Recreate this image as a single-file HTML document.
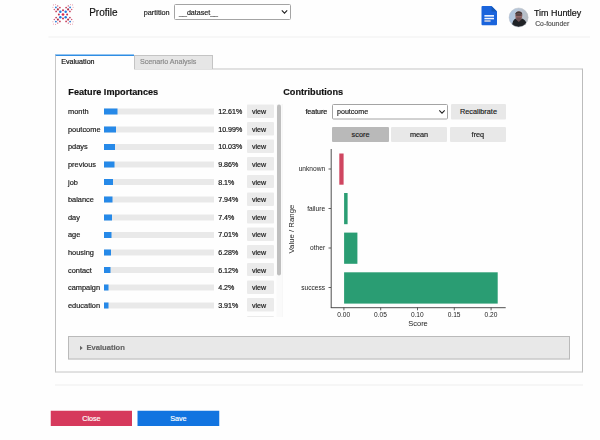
<!DOCTYPE html>
<html><head><meta charset="utf-8"><title>Profile</title>
<style>
html,body{margin:0;padding:0;background:#fefefe;}
body{width:600px;height:440px;position:relative;overflow:hidden;font-family:"Liberation Sans",Arial,sans-serif;color:#1a1a1a;}
#outer{position:absolute;left:0;top:0;width:1200px;height:880px;transform:scale(0.5);transform-origin:0 0;}
#inner{position:absolute;left:0;top:0;width:600px;height:440px;zoom:2;-webkit-text-stroke:0.18px;}
.abs{position:absolute;}
.title{left:89.2px;top:6.9px;font-size:10px;color:#111}
.plabel{left:143.7px;top:8.1px;font-size:7.3px;color:#222}
.sel{border:1px solid #a4a4a4;border-radius:1.5px;background:#fff;box-sizing:border-box;font-size:7.1px;color:#222;}
.hr{left:48.4px;width:541.4px;height:1px;background:#f0f0f0}
.uname{left:533.9px;top:7.9px;font-size:8.95px;color:#111}
.urole{left:535.2px;top:19.3px;font-size:6.8px;color:#555}
.panel{left:55px;top:68.4px;width:528px;height:304.3px;border:1px solid #c6c6c6;border-right-color:#bcbcbc;border-left-color:#c0c0c0;box-sizing:border-box;background:#fefefe}
.tab1{left:55px;top:54.6px;width:79.2px;height:15.6px;box-sizing:border-box;border-left:1px solid #c8c8c8;border-top:1.5px solid #2f8de4;background:#fefefe}
.tab1t{left:61.2px;top:55.5px;font-size:7.15px;line-height:11.6px;color:#111}
.tab2{left:134px;top:55.2px;width:79px;height:13.6px;box-sizing:border-box;border:1px solid #c4c4c4;border-bottom:none;background:#e6e6e6;font-size:7.15px;line-height:11.4px;padding-left:4.9px;color:#8a8a8a}
h3{margin:0;font-size:9.15px;font-weight:bold;color:#111;position:absolute}
.row{position:absolute;left:0;height:16px;width:300px;font-size:7.4px;line-height:16px}
.fn{position:absolute;left:68px;color:#1a1a1a}
.track{position:absolute;left:104px;top:5.2px;width:110px;height:6px;background:#e9e9e9}
.fill{position:absolute;left:0;top:0;height:100%;background:#2689e8}
.pc{position:absolute;left:218.2px;color:#111;font-size:7.1px}
.vb{position:absolute;left:246.8px;top:0.9px;width:27.4px;height:13.4px;box-sizing:border-box;background:#ebebeb;padding-left:5.2px;font-size:7.1px;line-height:14.6px;color:#222;border-radius:1px}
.btn{position:absolute;background:#e8e8e8;text-align:center;font-size:7.3px;color:#222;border-radius:1px}
.acc{left:68px;top:336px;width:502px;height:23.5px;box-sizing:border-box;border:1px solid #bababa;background:#e8e8e8;font-size:7.6px;font-weight:bold;color:#666;line-height:21.4px}
.bb{position:absolute;top:410.6px;height:15.6px;width:81.4px;color:#fff;font-size:7.2px;text-align:center;line-height:15.4px}
svg text{font-family:"Liberation Sans",Arial,sans-serif}
</style></head><body><div id="outer"><div id="inner">
<svg class="abs" style="left:49.80px;top:1.40px" width="26" height="26" viewBox="-13 -13 26 26"><circle cx="0.00" cy="0.00" r="1.35" fill="#d8294f"/><circle cx="4.15" cy="0.00" r="1.0" fill="#c0304e"/><circle cx="-4.15" cy="0.00" r="1.0" fill="#c0304e"/><circle cx="0.00" cy="4.10" r="1.0" fill="#c0304e"/><circle cx="0.00" cy="-4.20" r="1.0" fill="#c0304e"/><circle cx="2.66" cy="2.66" r="1.25" fill="#1f7ae0"/><circle cx="5.10" cy="5.10" r="1.05" fill="#a8304a"/><circle cx="7.10" cy="7.10" r="0.95" fill="#2f7fd8"/><circle cx="3.10" cy="6.90" r="0.9" fill="#c8405c"/><circle cx="6.90" cy="3.10" r="0.9" fill="#c8405c"/><circle cx="5.30" cy="8.60" r="0.7" fill="#cc5070"/><circle cx="8.70" cy="5.00" r="0.7" fill="#cc5070"/><circle cx="9.60" cy="9.60" r="0.55" fill="#e59aaa"/><circle cx="7.40" cy="9.90" r="0.55" fill="#e59aaa"/><circle cx="10.10" cy="7.30" r="0.55" fill="#e59aaa"/><circle cx="2.66" cy="-2.66" r="1.25" fill="#1f7ae0"/><circle cx="5.10" cy="-5.10" r="1.05" fill="#a8304a"/><circle cx="7.10" cy="-7.10" r="0.95" fill="#2f7fd8"/><circle cx="3.10" cy="-6.90" r="0.9" fill="#c8405c"/><circle cx="6.90" cy="-3.10" r="0.9" fill="#c8405c"/><circle cx="5.30" cy="-8.60" r="0.7" fill="#cc5070"/><circle cx="8.70" cy="-5.00" r="0.7" fill="#cc5070"/><circle cx="9.60" cy="-9.60" r="0.55" fill="#e59aaa"/><circle cx="7.40" cy="-9.90" r="0.55" fill="#e59aaa"/><circle cx="10.10" cy="-7.30" r="0.55" fill="#e59aaa"/><circle cx="-2.66" cy="2.66" r="1.25" fill="#1f7ae0"/><circle cx="-5.10" cy="5.10" r="1.05" fill="#a8304a"/><circle cx="-7.10" cy="7.10" r="0.95" fill="#2f7fd8"/><circle cx="-3.10" cy="6.90" r="0.9" fill="#c8405c"/><circle cx="-6.90" cy="3.10" r="0.9" fill="#c8405c"/><circle cx="-5.30" cy="8.60" r="0.7" fill="#cc5070"/><circle cx="-8.70" cy="5.00" r="0.7" fill="#cc5070"/><circle cx="-9.60" cy="9.60" r="0.55" fill="#e59aaa"/><circle cx="-7.40" cy="9.90" r="0.55" fill="#e59aaa"/><circle cx="-10.10" cy="7.30" r="0.55" fill="#e59aaa"/><circle cx="-2.66" cy="-2.66" r="1.25" fill="#1f7ae0"/><circle cx="-5.10" cy="-5.10" r="1.05" fill="#a8304a"/><circle cx="-7.10" cy="-7.10" r="0.95" fill="#2f7fd8"/><circle cx="-3.10" cy="-6.90" r="0.9" fill="#c8405c"/><circle cx="-6.90" cy="-3.10" r="0.9" fill="#c8405c"/><circle cx="-5.30" cy="-8.60" r="0.7" fill="#cc5070"/><circle cx="-8.70" cy="-5.00" r="0.7" fill="#cc5070"/><circle cx="-9.60" cy="-9.60" r="0.55" fill="#e59aaa"/><circle cx="-7.40" cy="-9.90" r="0.55" fill="#e59aaa"/><circle cx="-10.10" cy="-7.30" r="0.55" fill="#e59aaa"/></svg>
<div class="abs title">Profile</div>
<div class="abs plabel">partition</div>
<div class="abs sel" style="left:173.8px;top:3.9px;width:117.4px;height:15.9px;line-height:14.3px;padding-left:4.2px">__dataset__</div>
<svg class="abs" style="left:281px;top:9.7px" width="7" height="5" viewBox="0 0 7 5"><path d="M0.8 0.8 L3.5 3.6 L6.2 0.8" fill="none" stroke="#222" stroke-width="1.1"/></svg>
<svg class="abs" style="left:481px;top:5px" width="17" height="21" viewBox="0 0 17 21">
<path d="M1.5 1 H10.5 L16 6.5 V19.3 a1 1 0 0 1 -1 1 H1.5 a1 1 0 0 1 -1 -1 V2 a1 1 0 0 1 1 -1z" fill="#1a64dc"/>
<path d="M10.5 1 L16 6.5 H10.5z" fill="#1558b8"/>
<rect x="3.4" y="10" width="9.6" height="1.7" fill="#e8f0fe"/><rect x="3.4" y="12.8" width="9.6" height="1.5" fill="#f4f8ff"/><rect x="3.4" y="15.3" width="6.2" height="1.4" fill="#e8e0e0"/>
</svg>
<svg class="abs" style="left:505px;top:4px" width="28" height="28" viewBox="505 4 28 28">
<defs><clipPath id="cp"><circle cx="518.6" cy="17.5" r="9.6"/></clipPath>
<linearGradient id="abg" x1="0" x2="1" y1="0" y2="0"><stop offset="0" stop-color="#a8c4e6"/><stop offset="0.5" stop-color="#b9c6d6"/><stop offset="1" stop-color="#b4b4b4"/></linearGradient></defs>
<g clip-path="url(#cp)"><rect x="505" y="4" width="28" height="28" fill="url(#abg)"/>
<ellipse cx="518.8" cy="15.6" rx="3.5" ry="4.4" fill="#8f6464"/>
<path d="M515.2 14.6 C515 10.6 522.6 10.6 522.4 14.6 C521 13.2 516.6 13.2 515.2 14.6z" fill="#3f3636"/>
<rect x="515.8" y="14.3" width="6" height="1.5" rx="0.7" fill="#4a3a3c"/>
<path d="M511.5 30 C512 23 513.2 19.4 515.6 18.6 L518.8 21 L522 18.6 C525.2 19.6 527.2 22.5 527.8 30z" fill="#1f2226"/>
<path d="M516 19.2 L518.8 22 L521.6 19.2 L521 17.6 L516.6 17.6z" fill="#6d5054"/>
</g><circle cx="518.6" cy="17.5" r="9.5" fill="none" stroke="#b8bec6" stroke-width="0.5"/></svg>
<div class="abs uname">Tim Huntley</div>
<div class="abs urole">Co-founder</div>
<div class="abs hr" style="top:36.5px"></div>

<div class="abs panel"></div>
<div class="abs tab1"></div><div class="abs tab1t">Evaluation</div>
<div class="abs tab2">Scenario Analysis</div>

<h3 style="left:68.3px;top:85.9px">Feature Importances</h3>
<div class="abs" style="left:0;top:0;width:300px;height:317.2px;overflow:hidden">
<div class="row" style="top:103.5px"><span class="fn">month</span><span class="track"><span class="fill" style="width:13.7px"></span></span><span class="pc">12.61%</span><span class="vb">view</span></div>
<div class="row" style="top:121.1px"><span class="fn">poutcome</span><span class="track"><span class="fill" style="width:12.0px"></span></span><span class="pc">10.99%</span><span class="vb">view</span></div>
<div class="row" style="top:138.7px"><span class="fn">pdays</span><span class="track"><span class="fill" style="width:10.9px"></span></span><span class="pc">10.03%</span><span class="vb">view</span></div>
<div class="row" style="top:156.3px"><span class="fn">previous</span><span class="track"><span class="fill" style="width:10.7px"></span></span><span class="pc">9.86%</span><span class="vb">view</span></div>
<div class="row" style="top:173.9px"><span class="fn">job</span><span class="track"><span class="fill" style="width:8.8px"></span></span><span class="pc">8.1%</span><span class="vb">view</span></div>
<div class="row" style="top:191.5px"><span class="fn">balance</span><span class="track"><span class="fill" style="width:8.7px"></span></span><span class="pc">7.94%</span><span class="vb">view</span></div>
<div class="row" style="top:209.1px"><span class="fn">day</span><span class="track"><span class="fill" style="width:8.1px"></span></span><span class="pc">7.4%</span><span class="vb">view</span></div>
<div class="row" style="top:226.7px"><span class="fn">age</span><span class="track"><span class="fill" style="width:7.6px"></span></span><span class="pc">7.01%</span><span class="vb">view</span></div>
<div class="row" style="top:244.3px"><span class="fn">housing</span><span class="track"><span class="fill" style="width:6.8px"></span></span><span class="pc">6.28%</span><span class="vb">view</span></div>
<div class="row" style="top:261.9px"><span class="fn">contact</span><span class="track"><span class="fill" style="width:6.7px"></span></span><span class="pc">6.12%</span><span class="vb">view</span></div>
<div class="row" style="top:279.5px"><span class="fn">campaign</span><span class="track"><span class="fill" style="width:4.6px"></span></span><span class="pc">4.2%</span><span class="vb">view</span></div>
<div class="row" style="top:297.1px"><span class="fn">education</span><span class="track"><span class="fill" style="width:4.3px"></span></span><span class="pc">3.91%</span><span class="vb">view</span></div>

<div class="vb" style="top:316px;font-size:7.4px"></div>
</div>
<div class="abs" style="left:276.4px;top:104px;width:6.2px;height:213.2px;background:#fafafa;box-shadow:inset 0.5px 0 0 #f1f1f1,inset -0.5px 0 0 #f1f1f1"></div>
<div class="abs" style="left:277px;top:104.4px;width:4px;height:171px;background:#bfbfbf;border-radius:2px"></div>

<h3 style="left:283.2px;top:85.9px">Contributions</h3>
<div class="abs" style="left:305.4px;top:107.6px;font-size:7px;color:#111">feature</div>
<div class="abs sel" style="left:332px;top:104px;width:116px;height:15.5px;line-height:13.5px;padding-left:4px">poutcome</div>
<svg class="abs" style="left:438.5px;top:109.5px" width="7" height="5" viewBox="0 0 7 5"><path d="M0.8 0.8 L3.5 3.6 L6.2 0.8" fill="none" stroke="#222" stroke-width="1.1"/></svg>
<div class="btn" style="left:451px;top:104px;width:55px;height:15.5px;line-height:15.5px">Recalibrate</div>
<div class="btn" style="left:332.2px;top:126.8px;width:56.7px;height:15px;line-height:14.6px;background:#b9b9b9">score</div>
<div class="btn" style="left:391.1px;top:126.8px;width:55.9px;height:15px;line-height:14.6px">mean</div>
<div class="btn" style="left:449.8px;top:126.8px;width:56.2px;height:15px;line-height:14.6px">freq</div>

<svg class="abs" style="left:280px;top:145px" width="240" height="190" viewBox="280 145 240 190">
<rect x="339.3" y="153.5" width="4.3" height="31.2" fill="#cf4660"/>
<rect x="344.1" y="193" width="3.5" height="31.2" fill="#2a9d73"/>
<rect x="344.1" y="232.6" width="13.3" height="31.2" fill="#2a9d73"/>
<rect x="344.1" y="272.3" width="153.6" height="31.3" fill="#2a9d73"/>
<path d="M331.2 149 V307.7 M330.8 307.7 H505.7" stroke="#222" stroke-width="0.8" fill="none"/>
<path d="M328.5 169 H331 M328.5 208.5 H331 M328.5 248 H331 M328.5 287.5 H331" stroke="#222" stroke-width="0.7"/>
<path d="M343.9 307.7 V310.3 M380.7 307.7 V310.3 M417.5 307.7 V310.3 M454.3 307.7 V310.3 M491.1 307.7 V310.3" stroke="#222" stroke-width="0.7"/>
<g font-size="6.6" fill="#222" text-anchor="end">
<text x="325.1" y="171.2">unknown</text><text x="325.1" y="210.7">failure</text><text x="325.1" y="250.2">other</text><text x="325.1" y="289.7">success</text></g>
<g font-size="6.6" fill="#222" text-anchor="middle">
<text x="343.7" y="316.9">0.00</text><text x="380.5" y="316.9">0.05</text><text x="417.3" y="316.9">0.10</text><text x="454.1" y="316.9">0.15</text><text x="490.9" y="316.9">0.20</text></g>
<text x="418" y="326" font-size="7.5" fill="#222" text-anchor="middle">Score</text>
<text transform="translate(294,229.1) rotate(-90)" font-size="7.8" fill="#222" text-anchor="middle">Value / Range</text>
</svg>

<div class="abs acc"><span style="position:absolute;left:17.5px">Evaluation</span>
<svg style="position:absolute;left:10.5px;top:8.6px" width="4" height="5" viewBox="0 0 4 5"><path d="M0.5 0.3 L3.2 2.5 L0.5 4.7z" fill="#666"/></svg></div>
<div class="abs hr" style="top:384.3px;left:55px;width:528px;background:#ededed"></div>
<div class="bb" style="left:50.7px;background:#d6395c">Close</div>
<div class="bb" style="left:137.4px;width:81.9px;background:#1274e0">Save</div>

</div></div>
</body></html>
